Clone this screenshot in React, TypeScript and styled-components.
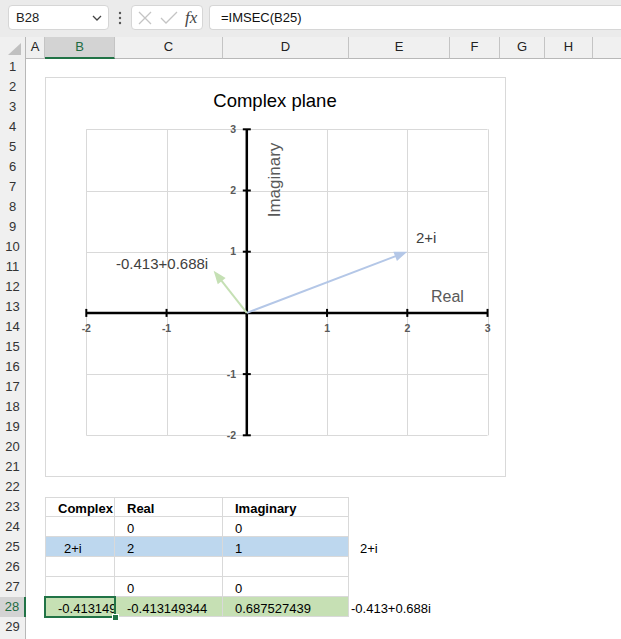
import styled, { createGlobalStyle, css } from 'styled-components';

const GlobalStyle = createGlobalStyle`
  html, body { margin: 0; padding: 0; background: #fff; }
  body { font-family: "Liberation Sans", Arial, sans-serif; overflow: hidden; }
`;

const COLS: { id: string; w: number }[] = [
  { id: 'A', w: 19 },
  { id: 'B', w: 70 },
  { id: 'C', w: 108 },
  { id: 'D', w: 126 },
  { id: 'E', w: 101 },
  { id: 'F', w: 50 },
  { id: 'G', w: 45 },
  { id: 'H', w: 48 },
  { id: 'I', w: 90 },
];
const GRID = `26px ${COLS.map((c) => `${c.w}px`).join(' ')}`;

type CellDef = { text?: string; bold?: boolean; indent?: number };

const DATA: Record<number, Record<string, CellDef>> = {
  23: { B: { text: 'Complex', bold: true }, C: { text: 'Real', bold: true }, D: { text: 'Imaginary', bold: true } },
  24: { C: { text: '0' }, D: { text: '0' } },
  25: { B: { text: '2+i', indent: 18 }, C: { text: '2' }, D: { text: '1' }, E: { text: '2+i', indent: 11 } },
  27: { C: { text: '0' }, D: { text: '0' } },
  28: {
    B: { text: '-0.413149344' },
    C: { text: '-0.413149344' },
    D: { text: '0.687527439' },
    E: { text: '-0.413+0.688i', indent: 2 },
  },
};

const BANDS: Record<number, string> = { 25: '#bdd7ee', 28: '#c6e0b4' };
const TABLE_COLS = ['B', 'C', 'D'];
const ACTIVE_ROW = 28;
const ACTIVE_COL = 'B';

// chart scale (px inside the chart frame)
const sx = (v: number) => 41.3 + (v + 2) * 80.25;
const sy = (v: number) => 52.3 + (3 - v) * 61.2;
const TICKS = [-2, -1, 0, 1, 2, 3];
const crisp = (n: number) => Math.round(n) + 0.5;

function Arrow({ x, y, color }: { x: number; y: number; color: string }) {
  const ox = sx(0);
  const oy = sy(0);
  const tx = sx(x);
  const ty = sy(y);
  const len = Math.hypot(tx - ox, ty - oy);
  const ux = (tx - ox) / len;
  const uy = (ty - oy) / len;
  const hl = 13;
  const hw = 5;
  const bx = tx - ux * hl;
  const by = ty - uy * hl;
  const head = `${tx},${ty} ${bx - uy * hw},${by + ux * hw} ${bx + uy * hw},${by - ux * hw}`;
  return (
    <g>
      <line x1={ox} y1={oy} x2={bx + ux * 2} y2={by + uy * 2} stroke={color} strokeWidth={2} />
      <polygon points={head} fill={color} />
    </g>
  );
}

function Chart() {
  const x0 = sx(0);
  const y0 = sy(0);
  return (
    <ChartBox>
      <svg width={461} height={400} viewBox="0 0 461 400">
        <text x={230} y={30} textAnchor="middle" fontSize={18.5} fill="#000" fontFamily="Liberation Sans, Arial, sans-serif">
          Complex plane
        </text>
        {TICKS.map((v) => (
          <line key={`gv${v}`} x1={crisp(sx(v))} x2={crisp(sx(v))} y1={sy(3)} y2={sy(-2)} stroke="#d9d9d9" strokeWidth={1} />
        ))}
        {TICKS.map((v) => (
          <line key={`gh${v}`} y1={crisp(sy(v))} y2={crisp(sy(v))} x1={sx(-2)} x2={sx(3)} stroke="#d9d9d9" strokeWidth={1} />
        ))}
        <line x1={sx(-2)} x2={sx(3)} y1={y0} y2={y0} stroke="#000" strokeWidth={2.5} />
        <line x1={x0} x2={x0} y1={sy(3)} y2={sy(-2)} stroke="#000" strokeWidth={2.5} />
        {TICKS.map((v) => (
          <line key={`tx${v}`} x1={sx(v)} x2={sx(v)} y1={y0 - 4} y2={y0 + 4} stroke="#000" strokeWidth={2} />
        ))}
        {TICKS.map((v) => (
          <line key={`ty${v}`} y1={sy(v)} y2={sy(v)} x1={x0 - 4} x2={x0 + 4} stroke="#000" strokeWidth={2} />
        ))}
        <g fontSize={10.5} fontWeight={700} fill="#595959" fontFamily="Liberation Sans, Arial, sans-serif">
          {TICKS.filter((v) => v !== 0).map((v) => (
            <text key={`lx${v}`} x={sx(v)} y={255} textAnchor="middle">
              {v}
            </text>
          ))}
          {TICKS.filter((v) => v !== 0).map((v) => (
            <text key={`ly${v}`} x={191} y={sy(v) + 3.5} textAnchor="end">
              {v}
            </text>
          ))}
        </g>
        <text
          transform="translate(235,103) rotate(-90)"
          textAnchor="middle"
          fontSize={17}
          fill="#595959"
          fontFamily="Liberation Sans, Arial, sans-serif"
        >
          Imaginary
        </text>
        <text x={386} y={225} fontSize={16} fill="#595959" fontFamily="Liberation Sans, Arial, sans-serif">
          Real
        </text>
        <Arrow x={2} y={1} color="#b4c7e7" />
        <Arrow x={-0.413149} y={0.687527} color="#c5e0b4" />
        <g fontSize={15} fill="#404040" fontFamily="Liberation Sans, Arial, sans-serif">
          <text x={371} y={166}>2+i</text>
          <text x={71} y={192}>-0.413+0.688i</text>
        </g>
      </svg>
    </ChartBox>
  );
}

export default function App() {
  const rows = Array.from({ length: 30 }, (_, i) => i + 1);
  return (
    <>
      <GlobalStyle />
      <Page>
        <TopBar>
          <NameBox>
            <span>B28</span>
            <svg width="10" height="6" viewBox="0 0 10 6">
              <path d="M1 1 L5 5 L9 1" fill="none" stroke="#444" strokeWidth="1.3" />
            </svg>
          </NameBox>
          <Dots>
            <svg width="4" height="14" viewBox="0 0 4 14">
              <circle cx="2" cy="2" r="1.2" fill="#555" />
              <circle cx="2" cy="7" r="1.2" fill="#555" />
              <circle cx="2" cy="12" r="1.2" fill="#555" />
            </svg>
          </Dots>
          <FxBox>
            <svg width="14" height="14" viewBox="0 0 14 14">
              <path d="M1 1 L13 13 M13 1 L1 13" stroke="#c4c4c4" strokeWidth="1.3" fill="none" />
            </svg>
            <svg width="18" height="14" viewBox="0 0 18 14">
              <path d="M1 7 L6 12 L17 1" stroke="#c4c4c4" strokeWidth="1.3" fill="none" />
            </svg>
            <FxGlyph>fx</FxGlyph>
          </FxBox>
          <FormulaInput>=IMSEC(B25)</FormulaInput>
        </TopBar>

        <Sheet>
          <Row>
            <Corner>
              <svg width="14" height="12" viewBox="0 0 14 12">
                <path d="M13 0 L13 12 L0 12 Z" fill="#c0c0c0" />
              </svg>
            </Corner>
            {COLS.map((c) => (
              <ColHead key={c.id} $active={c.id === ACTIVE_COL}>
                {c.id}
              </ColHead>
            ))}
          </Row>

          {rows.map((r) => (
            <Row key={r}>
              <RowHead $active={r === ACTIVE_ROW}>{r}</RowHead>
              {COLS.map((c) => {
                const def = DATA[r]?.[c.id];
                const inTable = r >= 23 && r <= 28 && TABLE_COLS.includes(c.id);
                return (
                  <Cell
                    key={c.id}
                    $bold={def?.bold}
                    $indent={def?.indent}
                    $bg={inTable ? BANDS[r] : undefined}
                    $table={inTable}
                    $top={inTable && r === 23}
                    $left={inTable && c.id === 'B'}
                  >
                    {def?.text}
                  </Cell>
                );
              })}
            </Row>
          ))}

          <Chart />
          <Selection>
            <Handle />
          </Selection>
        </Sheet>
      </Page>
    </>
  );
}

const Page = styled.div`
  width: 621px;
  height: 639px;
  overflow: hidden;
  background: #fff;
  font-family: "Liberation Sans", Arial, sans-serif;
  font-size: 13px;
  color: #000;
`;

const TopBar = styled.div`
  height: 37px;
  box-sizing: border-box;
  background: #ebebeb;
  display: flex;
  align-items: flex-start;
  padding: 5px 0 0 8px;
`;

const Box = styled.div`
  height: 25px;
  box-sizing: border-box;
  background: #fff;
  border: 1px solid #d6d6d6;
  border-radius: 4px;
  display: flex;
  align-items: center;
`;

const NameBox = styled(Box)`
  width: 101px;
  padding: 0 6px 0 7px;
  justify-content: space-between;
  color: #222;
`;

const Dots = styled.div`
  width: 22px;
  height: 25px;
  display: flex;
  align-items: center;
  justify-content: center;
`;

const FxBox = styled(Box)`
  width: 72px;
  padding-left: 6px;
  gap: 8px;
`;

const FxGlyph = styled.span`
  font-family: "Liberation Serif", "Times New Roman", serif;
  font-style: italic;
  font-size: 17px;
  color: #444;
  margin-left: -1px;
`;

const FormulaInput = styled(Box)`
  flex: 1;
  margin-left: 6px;
  border-right: none;
  border-radius: 4px 0 0 4px;
  padding-left: 11px;
  color: #111;
`;

const Sheet = styled.div`
  position: relative;
`;

const Row = styled.div`
  display: grid;
  grid-template-columns: ${GRID};
  height: 20px;
`;

const Corner = styled.div`
  box-sizing: border-box;
  background: #f0f0f0;
  border-right: 1px solid #b8b8b8;
  border-bottom: 1px solid #b8b8b8;
  display: flex;
  align-items: flex-end;
  justify-content: flex-end;
  padding: 0 3px 3px 0;
`;

const ColHead = styled.div<{ $active?: boolean }>`
  box-sizing: border-box;
  background: ${(p) => (p.$active ? '#d3d3d3' : '#f0f0f0')};
  border-right: 1px solid #c4c4c4;
  border-bottom: ${(p) => (p.$active ? '2px solid #217346' : '1px solid #b8b8b8')};
  color: ${(p) => (p.$active ? '#1e6b41' : '#222')};
  text-align: center;
  line-height: 20px;
  font-size: 13px;
`;

const RowHead = styled.div<{ $active?: boolean }>`
  box-sizing: border-box;
  background: ${(p) => (p.$active ? '#d3d3d3' : '#f0f0f0')};
  border-right: ${(p) => (p.$active ? '2px solid #217346' : '1px solid #b8b8b8')};
  border-bottom: 1px solid #d0d0d0;
  color: ${(p) => (p.$active ? '#1e6b41' : '#333')};
  text-align: center;
  line-height: 20px;
  font-size: 13px;
`;

const Cell = styled.div<{
  $bg?: string;
  $bold?: boolean;
  $indent?: number;
  $table?: boolean;
  $top?: boolean;
  $left?: boolean;
}>`
  box-sizing: border-box;
  height: 20px;
  padding: 2px 0 0 ${(p) => p.$indent ?? 12}px;
  line-height: 20px;
  white-space: nowrap;
  overflow: hidden;
  background: ${(p) => p.$bg ?? 'transparent'};
  font-weight: ${(p) => (p.$bold ? 700 : 400)};
  ${(p) =>
    p.$table &&
    css`
      border-right: 1px solid #d9d9d9;
      border-bottom: 1px solid #d9d9d9;
    `}
  ${(p) => p.$top && css`border-top: 1px solid #d9d9d9; padding-top: 1px;`}
  ${(p) => p.$left && css`border-left: 1px solid #d9d9d9;`}
`;

const ChartBox = styled.div`
  position: absolute;
  left: 45px;
  top: 40px;
  width: 461px;
  height: 400px;
  background: #fff;
  outline: 1px solid #d9d9d9;
  outline-offset: -1px;

  svg {
    display: block;
  }
`;

const Selection = styled.div`
  position: absolute;
  left: 44px;
  top: 559px;
  width: 72px;
  height: 22px;
  box-sizing: border-box;
  border: 2px solid #217346;
  pointer-events: none;
`;

const Handle = styled.span`
  position: absolute;
  right: -5px;
  bottom: -5px;
  width: 5px;
  height: 5px;
  background: #217346;
  border: 1px solid #fff;
`;
